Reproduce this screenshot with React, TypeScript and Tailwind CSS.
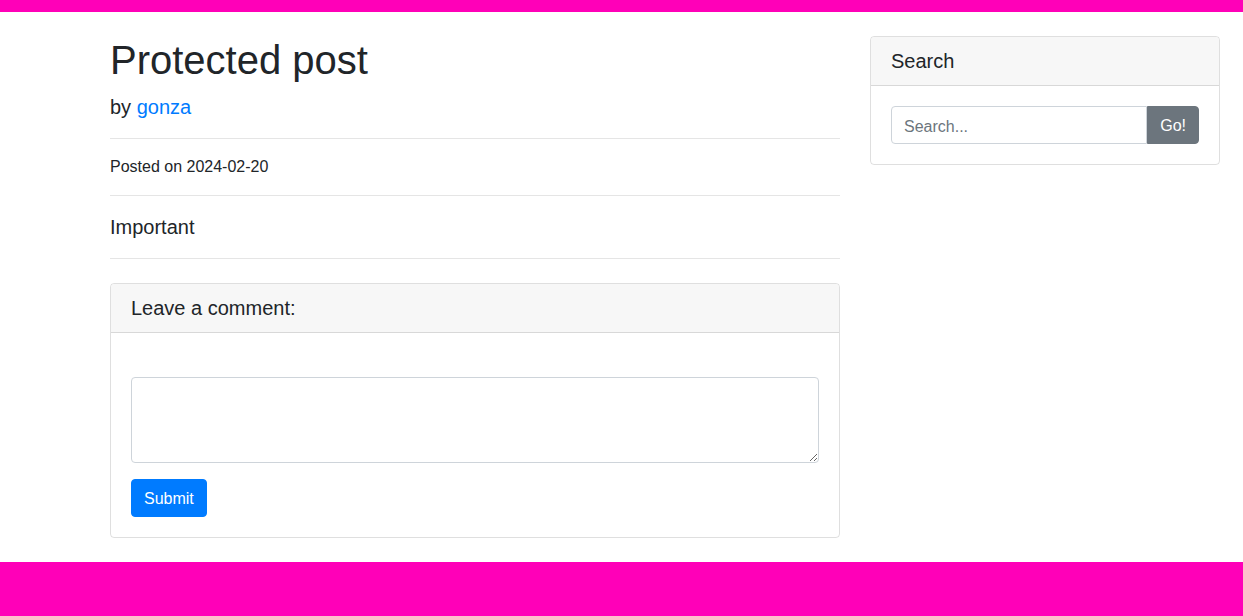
export default function App() {
  return (
    <div className="min-h-[616px] bg-white text-[#212529] font-['Liberation_Sans',Arial,sans-serif] text-base leading-6">
      <div className="h-3 bg-[#ff00b8]" />

      <div className="flex gap-[30px] pl-[110px]">
        {/* Post column */}
        <div className="w-[730px]">
          <h1 className="mt-6 mb-2 text-[40px] leading-[1.2] font-medium">Protected post</h1>
          <p className="text-xl leading-[30px]">
            by <a href="#" className="text-[#007bff]">gonza</a>
          </p>
          <hr className="my-4 border-t border-black/10" />
          <p>Posted on 2024-02-20</p>
          <hr className="my-4 border-t border-black/10" />
          <p className="text-xl leading-[30px]">Important</p>
          <hr className="my-4 border-t border-black/10" />

          <div className="mt-6 mb-6 rounded border border-black/[0.125]">
            <div className="bg-[#f7f7f7] border-b border-black/[0.125] px-5 py-3 rounded-t">
              <h5 className="text-xl leading-6 font-medium">Leave a comment:</h5>
            </div>
            <div className="p-5">
              <div className="h-6" />
              <form>
                <textarea
                  rows={3}
                  className="block w-full h-[86px] rounded border border-[#ced4da] px-3 py-1.5 text-base leading-6 text-[#495057] outline-none"
                />
                <button
                  type="button"
                  className="mt-4 rounded border border-[#007bff] bg-[#007bff] px-3 pt-[7px] pb-[5px] text-white text-base leading-6"
                >
                  Submit
                </button>
              </form>
            </div>
          </div>
        </div>

        {/* Sidebar */}
        <div className="w-[350px]">
          <div className="mt-6 rounded border border-black/[0.125]">
            <div className="bg-[#f7f7f7] border-b border-black/[0.125] px-5 py-3 rounded-t">
              <h5 className="text-xl leading-6 font-medium">Search</h5>
            </div>
            <div className="p-5">
              <div className="flex">
                <input
                  type="text"
                  placeholder="Search..."
                  className="h-[38px] flex-1 min-w-0 rounded-l border border-[#ced4da] px-3 pt-2 pb-1 text-base leading-6 text-[#495057] placeholder:text-[#6c757d] outline-none"
                />
                <button
                  type="button"
                  className="rounded-r border border-[#6c757d] bg-[#6c757d] px-3 pt-[7px] pb-[5px] text-white text-base leading-6"
                >
                  Go!
                </button>
              </div>
            </div>
          </div>
        </div>
      </div>

      <div className="h-[54px] bg-[#ff00b8]" />
    </div>
  )
}
